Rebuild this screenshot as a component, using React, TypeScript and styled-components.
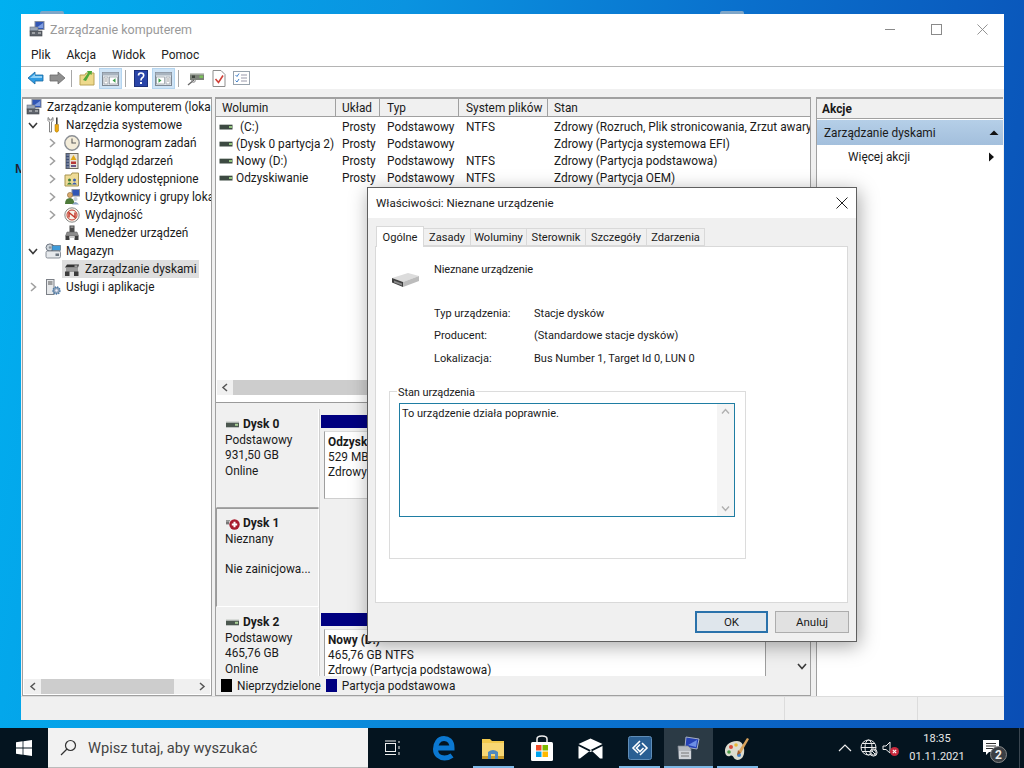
import React from "react";
import styled, { createGlobalStyle } from "styled-components";

const Global = createGlobalStyle`
  html, body { margin: 0; width: 1024px; height: 768px; overflow: hidden; }
  body { font-family: "Roboto", "Liberation Sans", sans-serif; font-size: 11.85px; color: #1a1a1a; }
  * { box-sizing: border-box; }
  svg { display: block; flex: none; }
`;

const Desktop = styled.div`
  position: relative; width: 1024px; height: 768px; display: flex; flex-direction: column; overflow: hidden;
  background: linear-gradient(100deg, #00b0f0 0%, #0a93e0 35%, #0a6fcc 65%, #0a4db4 100%);
`;
const Peek = styled.span`
  position: absolute; left: 15px; top: 161px; font-size: 13px; font-weight: 500; color: #223;
`;
const PeekTab = styled.span<{ $x: number }>`
  position: absolute; left: ${p => p.$x}px; top: 11px; width: 24px; height: 3px; background: #7fa6c8; border-radius: 2px 2px 0 0;
`;
const WorkArea = styled.div`
  position: relative; height: 728px; padding: 14px 20px 8px 21px;
`;
const Win = styled.div`
  height: 706px; background: #fff; display: flex; flex-direction: column;
`;
const TitleBar = styled.div`
  height: 30px; flex: none; display: flex; align-items: center; padding: 0 0 0 8px; gap: 5px;
`;
const TitleText = styled.span`
  font-size: 12.5px; color: #999;
`;
const Controls = styled.div`
  margin-left: auto; margin-right: -1px; display: flex; align-items: center;
`;
const Ctrl = styled.div`
  width: 46px; height: 30px; display: flex; align-items: center; justify-content: center; color: #8a8a8a;
`;
const MenuBar = styled.div`
  height: 23px; flex: none; display: flex; align-items: center; gap: 16px; padding: 0 0 0 10px; border-bottom: 1px solid #b4b4b4; font-size: 12px; color: #222;
`;
const ToolBar = styled.div`
  height: 22px; flex: none; display: flex; align-items: center; padding-left: 3px; background: #fff;
`;
const ToolBtn = styled.div<{ $w?: number; $on?: boolean }>`
  width: ${p => p.$w ?? 22}px; height: 21px; display: flex; align-items: center; justify-content: center; flex: none;
  background: ${p => (p.$on ? "#cfe4f6" : "transparent")};
  box-shadow: ${p => (p.$on ? "inset 0 0 0 1px #b5d5ef" : "none")};
`;
const ToolSep = styled.div`
  width: 1px; height: 17px; background: #a8a8a8; margin: 0 3px; flex: none;
`;
const Band = styled.div`
  height: 8px; flex: none; background: #f0f0f0;
`;
const Panes = styled.div`
  height: 599px; flex: none; display: flex; padding-left: 1px; background: #f0f0f0;
`;
const LeftPane = styled.div`
  width: 190px; margin-right: 3px; background: #fff; border: 1px solid #a0a0a0; border-top-width: 2px; display: flex; flex-direction: column; overflow: hidden;
`;
const Tree = styled.div`
  flex: 1; overflow: hidden; margin-top: -1px;
`;
const TreeRow = styled.div<{ $level: number }>`
  height: 18px; display: flex; align-items: center; white-space: nowrap; color: #1a1a1a;
  padding-left: ${p => (p.$level === 2 ? 22 : 3)}px;
`;
const Chevron = styled.div`
  width: 14px; display: flex; justify-content: center; flex: none;
`;
const Node = styled.div<{ $sel?: boolean; $root?: boolean }>`
  height: 18px; display: flex; align-items: center; gap: 5px; padding: 0 2px 0 2px;
  margin-left: ${p => (p.$root ? -2 : 3)}px;
  background: ${p => (p.$sel ? "#dedede" : "transparent")};
`;
const HScroll = styled.div`
  height: 15px; flex: none; display: flex; align-items: center; background: #f0f0f0; margin: 0 1px 1px;
`;
const ScrollBtn = styled.div<{ $w: number }>`
  width: ${p => p.$w}px; flex: none; display: flex; align-items: center; justify-content: center; color: #555;
`;
const Thumb = styled.div<{ $w: number }>`
  width: ${p => p.$w}px; height: 15px; background: #cdcdcd; flex: none;
`;
const ScrollFill = styled.div`
  flex: 1;
`;
const CenterPane = styled.div`
  width: 596px; margin-right: 5px; background: #fff; border: 1px solid #a0a0a0; border-top-width: 2px; display: flex; flex-direction: column; overflow: hidden;
`;
const cols = "120px 44px 79px 89px 1fr";
const ListHead = styled.div`
  height: 18px; flex: none; display: grid; grid-template-columns: ${cols}; background: #f0f0f0; border-bottom: 1px solid #a0a0a0;
`;
const HeadCell = styled.div<{ $pad?: number }>`
  display: flex; align-items: center; padding-left: ${p => p.$pad ?? 6}px; border-right: 1px solid #a0a0a0; color: #1a1a1a;
  &:last-child { border-right: 0; }
`;
const ListBody = styled.div`
  height: 263px; flex: none; padding-top: 1px; overflow: hidden;
`;
const ListRow = styled.div`
  height: 17px; display: grid; grid-template-columns: ${cols}; align-items: center; white-space: nowrap; color: #1a1a1a;
`;
const Cell = styled.div<{ $pad?: number }>`
  padding-left: ${p => p.$pad ?? 6}px; overflow: hidden; display: flex; align-items: center;
`;
const NameCell = styled(Cell)`
  padding-left: 3px; gap: 3px;
`;
const VolName = styled.span<{ $x: number }>`
  padding-left: ${p => p.$x}px;
`;
const Splitter = styled.div`
  height: 10px; flex: none; background: #fff; border-bottom: 3px solid #f0f0f0; box-shadow: inset 0 -1px 0 #9a9a9a;
`;
const Lower = styled.div`
  flex: 1; min-height: 0; display: flex; overflow: hidden; background: #f0f0f0;
`;
const DiskList = styled.div`
  flex: 1; min-width: 0; overflow: hidden; padding-top: 3px;
`;
const DiskRow = styled.div`
  height: 99px; display: grid; grid-template-columns: 103px 1fr;
`;
const DiskLabel = styled.div<{ $dark?: boolean }>`
  padding: 7px 0 0 8px; background: #f0f0f0; line-height: 15.3px; color: #1a1a1a;
  border-top: 1px solid ${p => (p.$dark ? "#9a9a9a" : "#f0f0f0")};
  border-left: 1px solid ${p => (p.$dark ? "#9a9a9a" : "#f0f0f0")};
  border-right: 1px solid #fff;
  border-bottom: 1px solid ${p => (p.$dark ? "#fff" : "#a8a8a8")};
`;
const DiskName = styled.div`
  display: flex; align-items: center; gap: 2px; font-weight: 700; height: 16px; font-size: 12px;
`;
const BlankGap = styled.div`
  height: 15px;
`;
const DiskVol = styled.div`
  padding: 6px 27px 0 1px; display: flex; flex-direction: column; border-left: 1px solid #cfcfcf; background: #f0f0f0;
`;
const NavyBar = styled.div`
  height: 13px; background: #000080; flex: none;
`;
const Part = styled.div`
  margin: 3px 0 9px 3px; flex: 1; background: #fff; border-left: 1px solid #9e9e9e; border-right: 1px solid #9e9e9e; border-bottom: 1px solid #cfcfcf; border-top: 1px solid #dcdcdc; padding: 3px 0 0 3px; line-height: 15px; white-space: nowrap; overflow: hidden;
`;
const PartName = styled.div`
  font-weight: 700;
`;
const VScroll = styled.div`
  width: 17px; flex: none; display: flex; flex-direction: column; justify-content: flex-end; align-items: center; background: #f0f0f0; padding-bottom: 5px; color: #555;
`;
const Legend = styled.div`
  height: 19px; flex: none; display: flex; align-items: center; background: #f0f0f0; padding-left: 5px; white-space: nowrap;
`;
const Swatch = styled.span<{ $c: string }>`
  width: 11px; height: 13px; background: ${p => p.$c}; margin-right: 5px; flex: none;
`;
const LegendText = styled.span`
  margin-right: 5px;
`;
const RightPane = styled.div`
  width: 187px; background: #fff; border: 1px solid #a0a0a0; border-top-width: 2px; border-right: 0; border-bottom: 0; display: flex; flex-direction: column;
`;
const ActHead = styled.div`
  height: 20px; background: #f0f0f0; border-bottom: 1px solid #a0a0a0; display: flex; align-items: center; padding-left: 5px; font-weight: 700; flex: none;
`;
const ActBand = styled.div`
  height: 25px; margin-top: 1px; background: linear-gradient(#b5cfe8, #a3bfdc); display: flex; align-items: center; justify-content: space-between; padding: 0 4px 0 7px; flex: none; color: #1a1a1a;
`;
const ActItem = styled.div`
  height: 24px; display: flex; align-items: center; justify-content: space-between; padding: 0 7px 0 31px; flex: none;
`;
const StatusBar = styled.div`
  flex: 1; display: flex; justify-content: flex-end; background: #f0f0f0; border-top: 1px solid #dcdcdc;
`;
const StatusCell = styled.div<{ $w: number }>`
  width: ${p => p.$w}px; border-left: 1px solid #dcdcdc; flex: none;
`;

/* dialog */
const Dialog = styled.div`
  position: absolute; left: 367px; top: 187px; width: 490px; height: 455px; display: flex; flex-direction: column;
  background: #f0f0f0; border: 1px solid #5f5f5f; box-shadow: 2px 4px 18px rgba(0, 0, 0, 0.35);
`;
const DlgTitle = styled.div`
  height: 30px; flex: none; background: #fff; display: flex; align-items: center; justify-content: space-between; padding: 0 8px 0 8px; color: #1a1a1a; font-size: 11.6px;
`;
const DlgBody = styled.div`
  flex: 1; display: flex; flex-direction: column; padding: 7px 8px 0 7px; font-size: 11px;
`;
const Tabs = styled.div`
  height: 21px; flex: none; display: flex; align-items: flex-end; padding-left: 1px;
`;
const Tab = styled.div<{ $w: number; $on?: boolean }>`
  width: ${p => p.$w}px; height: ${p => (p.$on ? 21 : 18)}px; flex: none; display: flex; align-items: center; justify-content: center;
  background: ${p => (p.$on ? "#fff" : "#f0f0f0")}; color: #1a1a1a;
  border: 1px solid #d9d9d9; border-bottom: ${p => (p.$on ? "0" : "1px solid #d9d9d9")};
  border-left-width: ${p => (p.$on ? 1 : 0)}px;
  margin-bottom: ${p => (p.$on ? -1 : 0)}px; position: relative; font-size: 11.1px;
`;
const Panel = styled.div`
  height: 357px; flex: none; background: #fff; border: 1px solid #d9d9d9; padding: 0 0 0 13px;
`;
const DevHead = styled.div`
  display: grid; grid-template-columns: 45px 1fr; height: 53px; padding-top: 16px; letter-spacing: -0.15px;
`;
const DevIconBox = styled.div`
  padding: 9px 0 0 2px;
`;
const PropGrid = styled.div`
  display: grid; grid-template-columns: 100px 1fr; grid-auto-rows: 22.5px; align-items: center; padding: 2px 0 0 45px; margin-bottom: 21px;
`;
const Group = styled.div`
  position: relative; width: 357px; height: 168px; border: 1px solid #dcdcdc; padding: 11px 0 0 9px;
`;
const GroupLabel = styled.span`
  position: absolute; left: 7px; top: -6px; background: #fff; padding: 0 1px; line-height: 14px; letter-spacing: -0.1px;
`;
const TextBox = styled.div`
  width: 336px; height: 114px; border: 1px solid #1f7da3; display: flex; justify-content: space-between; background: #fff;
`;
const BoxText = styled.div`
  padding: 3px 0 0 2px;
`;
const BoxScroll = styled.div`
  width: 17px; background: #f4f4f4; display: flex; flex-direction: column; justify-content: space-between; align-items: center; padding: 4px 0; color: #b0b0b0;
`;
const DlgFoot = styled.div`
  display: flex; justify-content: flex-end; gap: 7px; padding: 8px 0 0 0; margin-right: -1px;
`;
const Btn = styled.div<{ $def?: boolean; $w: number }>`
  width: ${p => p.$w}px; height: 22px; display: flex; align-items: center; justify-content: center; font-size: 11.5px; color: #1a1a1a;
  background: ${p => (p.$def ? "#dfe6ec" : "#e1e1e1")};
  border: ${p => (p.$def ? "2px solid #2a72ab" : "1px solid #adadad")};
`;

/* taskbar */
const Taskbar = styled.div`
  height: 40px; flex: none; background: #04141f; display: flex; align-items: stretch; color: #eee;
`;
const Start = styled.div`
  width: 48px; display: flex; align-items: center; justify-content: center; flex: none;
`;
const Search = styled.div`
  width: 320px; flex: none; background: #f2f2f2; display: flex; align-items: center; padding-left: 12px; gap: 11px; color: #444; font-size: 14.65px; border-bottom: 1px solid #bbb;
`;
const TaskView = styled.div`
  width: 52px; flex: none; display: flex; align-items: center; justify-content: center; padding-right: 4px;
`;
const TaskBtn = styled.div<{ $open?: boolean; $active?: boolean }>`
  position: relative; width: 48.8px; flex: none; display: flex; align-items: center; justify-content: center;
  background: ${p => (p.$active ? "#2b3a45" : "transparent")};
  &::after {
    content: ""; position: absolute; bottom: 0; height: 2px; background: #7db8e6;
    left: ${p => (p.$active ? 0 : 4)}px; right: ${p => (p.$active ? 0 : 4)}px;
    display: ${p => (p.$open ? "block" : "none")};
  }
`;
const Tray = styled.div`
  margin-left: auto; display: flex; align-items: center;
`;
const TrayIcon = styled.div<{ $w: number }>`
  width: ${p => p.$w}px; display: flex; align-items: center; justify-content: center; color: #e8e8e8;
`;
const Clock = styled.div`
  width: 72px; text-align: center; line-height: 18px; font-size: 11px; color: #e8e8e8;
`;
const Notif = styled.div`
  position: relative; width: 47px; height: 40px; display: flex; align-items: center; justify-content: center; padding-right: 11px;
  border-right: 1px solid #3a4650; margin-right: 4px;
`;
const Badge = styled.span`
  position: absolute; left: 17px; top: 18px; width: 17px; height: 17px; border-radius: 50%; background: #3b3f44; border: 1px solid #888;
  font-size: 12px; font-weight: 700; color: #eee; display: flex; align-items: center; justify-content: center;
`;

/* icons */
const Comp = () => (
  <svg width="16" height="16" viewBox="0 0 16 16">
    <rect x="6" y="0.5" width="9" height="8" fill="#3156b5" stroke="#8a8f9c" />
    <path d="M7 7 L14 2 V7Z" fill="#7e9ce0" />
    <rect x="1" y="6" width="8" height="4" fill="#9aa6b5" stroke="#6b7280" strokeWidth="0.6" />
    <rect x="1" y="10" width="12" height="5" fill="#5f646c" stroke="#3e4248" strokeWidth="0.6" />
    <rect x="3" y="11.5" width="3" height="1" fill="#ddd" />
    <rect x="9" y="11.5" width="3" height="1" fill="#ddd" />
  </svg>
);
const Tools = () => (
  <svg width="16" height="16" viewBox="0 0 16 16">
    <path d="M3 0.5 V3.5 L4.5 5 V15 H6.5 V5 L8 3.5 V0.5 L6.8 1.5 V3 H4.2 V1.5Z" fill="#fff" stroke="#666" strokeWidth="0.8" strokeLinejoin="round" />
    <rect x="11" y="0.5" width="1.6" height="7" fill="#444" />
    <path d="M10 7.5 H13.5 V14 Q11.8 16.5 10 14Z" fill="#eeaa10" stroke="#9c6e08" strokeWidth="0.5" />
  </svg>
);
const ClockI = () => (
  <svg width="16" height="16" viewBox="0 0 16 16">
    <circle cx="8" cy="8" r="7.2" fill="#f3ecd9" stroke="#8b8f94" strokeWidth="1.4" />
    <path d="M8 3.5 V8 H12" fill="none" stroke="#5c5c5c" strokeWidth="1.1" />
  </svg>
);
const EventV = () => (
  <svg width="16" height="16" viewBox="0 0 16 16">
    <rect x="2" y="0.5" width="12" height="15" fill="#e9e4d8" stroke="#6f6a5e" />
    <rect x="2" y="0.5" width="3.5" height="15" fill="#3f4f73" />
    <path d="M2.5 2 H5 M2.5 5 H5 M2.5 8 H5 M2.5 11 H5 M2.5 14 H5" stroke="#cdd3df" strokeWidth="0.7" />
    <path d="M9.5 2 L12.5 7 H6.5Z" fill="#e0a818" />
    <rect x="7" y="8.5" width="5" height="2.5" fill="#b83838" />
    <rect x="7" y="12" width="5" height="2" fill="#6a5a8a" />
  </svg>
);
const Shared = () => (
  <svg width="16" height="16" viewBox="0 0 16 16">
    <path d="M1 4 H7 L8 2 H14.5 V15 H1Z" fill="#eedb96" stroke="#a89550" />
    <circle cx="5.5" cy="9" r="1.5" fill="#3a7c3a" />
    <path d="M3 13.5 Q5.5 9.5 8 13.5Z" fill="#3a7c3a" />
    <circle cx="10.5" cy="9" r="1.5" fill="#3b5fb0" />
    <path d="M8 13.5 Q10.5 9.5 13 13.5Z" fill="#3b5fb0" />
  </svg>
);
const Users = () => (
  <svg width="16" height="16" viewBox="0 0 16 16">
    <rect x="8" y="0.5" width="7.5" height="6.5" fill="#3156b5" stroke="#8a8f9c" />
    <circle cx="6" cy="6" r="2.6" fill="#d9a96e" stroke="#7c5a2a" strokeWidth="0.5" />
    <path d="M1 15 Q1 9 6 9 Q10 9 10.5 15Z" fill="#4d7a3a" />
    <circle cx="11.5" cy="10" r="2" fill="#c9d2dc" />
    <path d="M8 15.5 Q11.5 10.5 15 15.5Z" fill="#8aa3c4" />
  </svg>
);
const Perf = () => (
  <svg width="16" height="16" viewBox="0 0 16 16">
    <circle cx="8" cy="8" r="7.2" fill="#f6f3ea" stroke="#8a8a8a" strokeWidth="1" />
    <circle cx="8" cy="8" r="5" fill="none" stroke="#c43a2c" strokeWidth="1" />
    <path d="M5 10.5 V5.5 L11 10.5 V5.5" fill="none" stroke="#c43a2c" strokeWidth="1.5" />
  </svg>
);
const DevMgr = () => (
  <svg width="16" height="16" viewBox="0 0 16 16">
    <rect x="5.5" y="0.5" width="5" height="6.5" fill="#4a4a4a" />
    <rect x="6.5" y="1.5" width="3" height="1.2" fill="#aaa" />
    <path d="M3 7 H13 L14.5 11 H1.5Z" fill="#8d8d8d" stroke="#555" strokeWidth="0.5" />
    <rect x="1.5" y="11" width="4" height="4" fill="#3e3e3e" />
    <rect x="10.5" y="11" width="4" height="4" fill="#3e3e3e" />
    <rect x="5.5" y="11" width="5" height="2" fill="#ccc" />
  </svg>
);
const Storage = () => (
  <svg width="16" height="16" viewBox="0 0 16 16">
    <ellipse cx="5" cy="4.5" rx="4" ry="3.6" fill="#cfd6dc" stroke="#6e7681" />
    <circle cx="5" cy="4.5" r="1.2" fill="#8c949c" />
    <rect x="7" y="2.5" width="8.5" height="5" fill="#3f9bd9" stroke="#55616e" strokeWidth="0.6" />
    <rect x="1" y="8" width="14.5" height="7" rx="1.5" fill="#e6e9ec" stroke="#6e7681" strokeWidth="0.8" />
    <rect x="10.5" y="10.5" width="3.5" height="2.5" fill="#6c7680" />
  </svg>
);
const DiskMgmt = () => (
  <svg width="16" height="16" viewBox="0 0 16 16">
    <path d="M3 3.5 H15 L14 6.5 H1Z" fill="#333" />
    <rect x="10.5" y="4.5" width="3" height="1.2" fill="#ccc" />
    <path d="M2 7 H14 V11 H2Z" fill="#9a9a9a" />
    <rect x="1" y="10.5" width="4.5" height="4.5" fill="#3c3c3c" />
    <rect x="10" y="10.5" width="4.5" height="4.5" fill="#3c3c3c" />
  </svg>
);
const Services = () => (
  <svg width="16" height="16" viewBox="0 0 16 16">
    <rect x="1.5" y="0.5" width="7.5" height="15" fill="#e6e8ea" stroke="#7c8087" />
    <path d="M3 3 H7.5 M3 5 H7.5" stroke="#555" />
    <circle cx="11.5" cy="11.5" r="3.4" fill="#8ea3b8" stroke="#4f7ba8" strokeWidth="1.6" strokeDasharray="1.4 0.9" />
    <circle cx="11.5" cy="11.5" r="1.2" fill="#eef" />
  </svg>
);
const Chev = ({ open }: { open?: boolean }) => (
  <svg width="10" height="10" viewBox="0 0 10 10" fill="none" stroke={open ? "#3a3a3a" : "#a0a0a0"} strokeWidth="1.6">
    {open ? <path d="M1 3 L5 7.5 L9 3" /> : <path d="M3 1 L7.5 5 L3 9" />}
  </svg>
);
const Drive = () => (
  <svg width="14" height="8" viewBox="0 0 14 8">
    <rect x="0.5" y="1" width="13" height="1.2" fill="#bfc5c0" />
    <rect x="0.5" y="2" width="13" height="4.5" fill="#3d4a42" />
    <rect x="10" y="3" width="3" height="2" fill="#93c47d" />
  </svg>
);
const DriveLabel = () => (
  <svg width="16" height="8" viewBox="0 0 16 8">
    <rect x="1" y="0.5" width="13" height="1.4" fill="#bfc5c0" />
    <rect x="1" y="1.8" width="13" height="4.5" fill="#4b574f" />
    <rect x="10" y="2.8" width="3" height="2" fill="#a9cf95" />
  </svg>
);
const DriveBad = () => (
  <svg width="16" height="14" viewBox="0 0 16 14">
    <rect x="1" y="3" width="4" height="1.4" fill="#999" />
    <rect x="1" y="4.4" width="3" height="3" fill="#777" />
    <circle cx="9.5" cy="7.5" r="5.2" fill="#a81c2e" />
    <path d="M9.5 4.8 V10.2 M6.8 7.5 H12.2" stroke="#fff" strokeWidth="2" />
  </svg>
);
const Back = () => (
  <svg width="17" height="14" viewBox="0 0 17 14">
    <path d="M1 7 L8 1 V4 H16 V10 H8 V13Z" fill="#2f9be3" stroke="#17679f" strokeWidth="0.8" />
    <path d="M3 7 L8 3 V5 H15 V7Z" fill="#8fd0f6" />
  </svg>
);
const Fwd = () => (
  <svg width="17" height="14" viewBox="0 0 17 14">
    <path d="M16 7 L9 1 V4 H1 V10 H9 V13Z" fill="#8f8f8f" stroke="#6b6b6b" strokeWidth="0.8" />
  </svg>
);
const UpFolder = () => (
  <svg width="16" height="16" viewBox="0 0 16 16">
    <path d="M1 5 H6 L7 3 H15 V15 H1Z" fill="#eed98c" stroke="#b9a255" />
    <path d="M4 10 L9 3 L8 1 L13 1 L12.5 5 L11 4 L7 11Z" fill="#4fa83a" />
  </svg>
);
const FlipBox = styled.div<{ $flip?: boolean }>`
  transform: ${p => (p.$flip ? "scaleX(-1)" : "none")};
`;
const PaneL = ({ flip }: { flip?: boolean }) => (
  <FlipBox $flip={flip}>
    <svg width="17" height="15" viewBox="0 0 17 15">
      <rect x="0.5" y="1.5" width="16" height="13" fill="#eef2f5" stroke="#7d8792" />
      <rect x="0.5" y="1.5" width="16" height="3" fill="#a9b4bf" />
      <rect x="2" y="6" width="4" height="7" fill="#fff" stroke="#8a939c" strokeWidth="0.7" />
      <path d="M3 8 H5 M3 10 H5" stroke="#777" strokeWidth="0.7" />
      <rect x="7.5" y="6" width="8" height="7" fill="#fff" stroke="#8a939c" strokeWidth="0.7" />
      <path d="M13.5 7.2 L10.5 9.5 L13.5 11.8Z" fill="#3aa04a" />
    </svg>
  </FlipBox>
);
const Help = () => (
  <svg width="14" height="17" viewBox="0 0 14 17">
    <rect x="0.5" y="0.5" width="13" height="16" fill="#2a45a8" stroke="#1c2f78" />
    <path d="M4.5 5.5 Q4.5 3 7 3 Q9.7 3 9.7 5.5 Q9.7 7 8 8 Q7 8.7 7 10.5" fill="none" stroke="#fff" strokeWidth="1.6" />
    <rect x="6" y="12" width="2" height="2" fill="#fff" />
  </svg>
);
const Connect = () => (
  <svg width="18" height="16" viewBox="0 0 18 16">
    <rect x="3" y="3" width="14" height="7" fill="#7c8278" />
    <rect x="3" y="3" width="14" height="1.5" fill="#c7cbc5" />
    <rect x="5" y="5.5" width="3" height="2.5" fill="#3e453e" />
    <rect x="12.5" y="5.5" width="3.5" height="2.5" fill="#7bc05a" />
    <path d="M1 15 L7 10" stroke="#666" strokeWidth="1.3" />
    <circle cx="6.5" cy="10.5" r="1.8" fill="none" stroke="#888" />
  </svg>
);
const CheckDoc = () => (
  <svg width="14" height="17" viewBox="0 0 14 17">
    <path d="M1 0.5 H9 L13 4.5 V16.5 H1Z" fill="#fff" stroke="#8d8d8d" />
    <path d="M3.5 9 L6.5 12.5 L11 5.5" fill="none" stroke="#d04038" strokeWidth="1.6" />
  </svg>
);
const ListI = () => (
  <svg width="17" height="14" viewBox="0 0 17 14">
    <rect x="0.5" y="0.5" width="16" height="13" fill="#fff" stroke="#97a2ac" />
    <path d="M2.5 4 L4 5.5 L6 2.5 M2.5 9.5 L4 11 L6 8" fill="none" stroke="#3f7fc9" strokeWidth="1" />
    <path d="M8 4 H14 M8 7 H14 M8 10 H14" stroke="#99a" strokeWidth="1" />
  </svg>
);
const X = ({ s, c }: { s: number; c: string }) => (
  <svg width={s} height={s} viewBox="0 0 12 12" fill="none" stroke={c} strokeWidth="1">
    <path d="M0.5 0.5 L11.5 11.5 M11.5 0.5 L0.5 11.5" />
  </svg>
);
const UsbDrive = () => (
  <svg width="29" height="16" viewBox="0 0 29 16">
    <path d="M1 6 L17 1 L28 4 L12 10Z" fill="#dcdcdc" />
    <path d="M1 6 L12 10 V15 L1 10.5Z" fill="#3f3f3f" />
    <path d="M12 10 L28 4 V9 L12 15Z" fill="#bcbcbc" />
    <path d="M3 8.5 L11 11.5 V13.5 L3 10.5Z" fill="#8a8a8a" />
  </svg>
);
const WinLogo = () => (
  <svg width="16" height="16" viewBox="0 0 16 16" fill="#fff">
    <path d="M0 2.2 L6.6 1.3 V7.5 H0Z M7.4 1.2 L16 0 V7.5 H7.4Z M0 8.5 H6.6 V14.7 L0 13.8Z M7.4 8.5 H16 V16 L7.4 14.8Z" />
  </svg>
);
const SearchI = () => (
  <svg width="17" height="17" viewBox="0 0 17 17" fill="none" stroke="#333" strokeWidth="1.2">
    <circle cx="10.5" cy="6.5" r="5" />
    <path d="M7 10 L1 16" />
  </svg>
);
const TaskViewI = () => (
  <svg width="17" height="16" viewBox="0 0 17 16" fill="none" stroke="#eee" strokeWidth="1">
    <rect x="1.5" y="3.5" width="10" height="8" />
    <path d="M1 1 H12 M1 14.5 H12 M15 1 V3 M15 6 V9 M15 12 V15" />
  </svg>
);
const Edge = () => (
  <svg width="24" height="26" viewBox="0 0 24 26">
    <path d="M5 13 H20 C20 6 16 3.5 12 3.5 C6.5 3.5 3.5 8.5 3.5 14 C3.5 20 8 23 12.5 23 C15.5 23 18 22 20 20.5" fill="none" stroke="#0b78d1" strokeWidth="5" />
  </svg>
);
const Folder = () => (
  <svg width="24" height="24" viewBox="0 0 24 24">
    <path d="M1 3 H9 L11 5 H23 V22 H1Z" fill="#f2c94c" />
    <rect x="1" y="7" width="22" height="15" fill="#f7d774" />
    <rect x="1" y="20" width="22" height="3" fill="#c79a2a" />
    <path d="M7 23 V16 Q12 12 17 16 V23 H14 V18 H10 V23Z" fill="#4f89c0" />
  </svg>
);
const Store = () => (
  <svg width="24" height="27" viewBox="0 0 24 27">
    <path d="M7 8 V4 Q7 1 12 1 Q17 1 17 4 V8" fill="none" stroke="#eee" strokeWidth="1.5" />
    <rect x="1" y="7" width="22" height="19" rx="1.5" fill="#fff" />
    <rect x="6" y="10" width="5.5" height="5.5" fill="#ef4b28" />
    <rect x="12.5" y="10" width="5.5" height="5.5" fill="#7fba00" />
    <rect x="6" y="16.5" width="5.5" height="5.5" fill="#00a4ef" />
    <rect x="12.5" y="16.5" width="5.5" height="5.5" fill="#ffb900" />
  </svg>
);
const Mail = () => (
  <svg width="25" height="21" viewBox="0 0 25 21">
    <path d="M0.5 6 L12.5 0.5 L24.5 6 L12.5 12Z" fill="#fff" />
    <path d="M0.5 8 L12.5 14 L24.5 8 V20.5 H22 L13 12 L2 20.5 H0.5Z" fill="#fff" />
  </svg>
);
const AppI = () => (
  <svg width="24" height="24" viewBox="0 0 24 24">
    <rect x="0.5" y="0.5" width="23" height="23" rx="2" fill="#2a5f93" stroke="#5f8db8" />
    <path d="M12 5 L5 12 L10 17 M12 8.5 L8.5 12 L12 15.5 L15.5 12 M14 7 L19 12 L12 19" fill="none" stroke="#fff" strokeWidth="1.6" />
  </svg>
);
const CompBig = () => (
  <svg width="24" height="24" viewBox="0 0 24 24">
    <path d="M10 1 L23 3 L21 13 L9 11Z" fill="#2541b5" stroke="#a6b0c6" />
    <path d="M12 9 L21 4 L20 11Z" fill="#6d8fe6" />
    <path d="M2 10 H12 L15 13 V23 H3Z" fill="#b3b7bd" stroke="#7f8690" strokeWidth="0.7" />
    <path d="M3 15 H15 V23 H3Z" fill="#cfd3d8" />
    <path d="M5 17 H13 M5 20 H13" stroke="#777" />
  </svg>
);
const Paint = () => (
  <svg width="26" height="25" viewBox="0 0 26 25">
    <path d="M13 5 C5 5 0.5 10 1 16 C1.5 20 4 21 6 20 C8 19 9 20 10 22 C11 24 15 25 18 22 C22 18 21 5 13 5Z" fill="#dcdcd0" />
    <circle cx="7" cy="11" r="2" fill="#d84a3c" />
    <circle cx="12" cy="9" r="1.8" fill="#e7b93a" />
    <circle cx="5" cy="16" r="1.8" fill="#4a9b48" />
    <circle cx="15" cy="19" r="2" fill="#3e7fc9" />
    <path d="M14 16 L23 2 L25 3 L17 17Z" fill="#d9a35c" />
    <path d="M14 14 L17 17 L13 19Z" fill="#a55a2a" />
  </svg>
);
const Caret = () => (
  <svg width="14" height="8" viewBox="0 0 14 8" fill="none" stroke="#eee" strokeWidth="1.2"><path d="M1 7 L7 1 L13 7" /></svg>
);
const Globe = () => (
  <svg width="18" height="18" viewBox="0 0 18 18" fill="none" stroke="#eee" strokeWidth="1">
    <circle cx="8.5" cy="8.5" r="7.5" />
    <ellipse cx="8.5" cy="8.5" rx="3.5" ry="7.5" />
    <path d="M1 8.5 H16 M2 4.5 H15 M2 12.5 H15" />
    <circle cx="13.5" cy="13.5" r="3.6" fill="#04141f" />
    <circle cx="13.5" cy="13.5" r="2.6" />
    <path d="M11.8 11.8 L15.2 15.2" />
  </svg>
);
const Speaker = () => (
  <svg width="18" height="17" viewBox="0 0 18 17">
    <path d="M1 6 H4 L8 2 V13 L4 9.5 H1Z" fill="none" stroke="#eee" strokeWidth="1" />
    <circle cx="12.5" cy="11.5" r="4.5" fill="#c8283c" />
    <path d="M10.8 9.8 L14.2 13.2 M14.2 9.8 L10.8 13.2" stroke="#fff" strokeWidth="1.1" />
  </svg>
);
const NotifI = () => (
  <svg width="16" height="16" viewBox="0 0 16 16">
    <path d="M0 0 H16 V12 H6 L3 15 V12 H0Z" fill="#fff" />
    <path d="M3 3.5 H13 M3 6 H13 M3 8.5 H10" stroke="#333" />
  </svg>
);
const Tri = ({ right }: { right?: boolean }) => (
  <svg width="10" height="10" viewBox="0 0 10 10">
    {right ? <path d="M3 0.5 L8 5 L3 9.5Z" fill="#111" /> : <path d="M0.5 7 L5 2.5 L9.5 7Z" fill="#111" />}
  </svg>
);
const ScrollL = () => (
  <svg width="8" height="9" viewBox="0 0 8 9" fill="none" stroke="#555" strokeWidth="1.5"><path d="M6 1 L2 4.5 L6 8" /></svg>
);
const ScrollR = () => (
  <svg width="8" height="9" viewBox="0 0 8 9" fill="none" stroke="#555" strokeWidth="1.5"><path d="M2 1 L6 4.5 L2 8" /></svg>
);

const tree: { l: 0 | 1 | 2; c?: "o" | "c"; t: string; i: React.ReactNode; s?: boolean }[] = [
  { l: 0, t: "Zarządzanie komputerem (lokalny)", i: <Comp /> },
  { l: 1, c: "o", t: "Narzędzia systemowe", i: <Tools /> },
  { l: 2, c: "c", t: "Harmonogram zadań", i: <ClockI /> },
  { l: 2, c: "c", t: "Podgląd zdarzeń", i: <EventV /> },
  { l: 2, c: "c", t: "Foldery udostępnione", i: <Shared /> },
  { l: 2, c: "c", t: "Użytkownicy i grupy lokalne", i: <Users /> },
  { l: 2, c: "c", t: "Wydajność", i: <Perf /> },
  { l: 2, t: "Menedżer urządzeń", i: <DevMgr /> },
  { l: 1, c: "o", t: "Magazyn", i: <Storage /> },
  { l: 2, t: "Zarządzanie dyskami", i: <DiskMgmt />, s: true },
  { l: 1, c: "c", t: "Usługi i aplikacje", i: <Services /> },
];
const vols = [
  { n: " (C:)", f: "NTFS", s: "Zdrowy (Rozruch, Plik stronicowania, Zrzut awaryjny, Partycja podstawowa)", x: 4 },
  { n: "(Dysk 0 partycja 2)", f: "", s: "Zdrowy (Partycja systemowa EFI)", x: 0 },
  { n: "Nowy (D:)", f: "NTFS", s: "Zdrowy (Partycja podstawowa)", x: 0 },
  { n: "Odzyskiwanie", f: "NTFS", s: "Zdrowy (Partycja OEM)", x: 0 },
];

export default function App() {
  return (
    <Desktop>
      <Global />
      <Peek>M</Peek>
      <PeekTab $x={40} />
      <PeekTab $x={720} />
      <WorkArea>
        <Win>
          <TitleBar>
            <Comp />
            <TitleText>Zarządzanie komputerem</TitleText>
            <Controls>
              <Ctrl><svg width="10" height="1" viewBox="0 0 10 1"><rect width="10" height="1" fill="#8a8a8a" /></svg></Ctrl>
              <Ctrl><svg width="11" height="11" viewBox="0 0 11 11" fill="none" stroke="#8a8a8a"><rect x="0.5" y="0.5" width="10" height="10" /></svg></Ctrl>
              <Ctrl><X s={11} c="#8a8a8a" /></Ctrl>
            </Controls>
          </TitleBar>
          <MenuBar><span>Plik</span><span>Akcja</span><span>Widok</span><span>Pomoc</span></MenuBar>
          <ToolBar>
            <ToolBtn><Back /></ToolBtn>
            <ToolBtn><Fwd /></ToolBtn>
            <ToolSep />
            <ToolBtn $w={24}><UpFolder /></ToolBtn>
            <ToolBtn $w={23} $on><PaneL /></ToolBtn>
            <ToolSep />
            <ToolBtn $w={23}><Help /></ToolBtn>
            <ToolBtn $w={23} $on><PaneL flip /></ToolBtn>
            <ToolSep />
            <ToolBtn $w={27}><Connect /></ToolBtn>
            <ToolBtn $w={19}><CheckDoc /></ToolBtn>
            <ToolBtn $w={26}><ListI /></ToolBtn>
          </ToolBar>
          <Band />
          <Panes>
            <LeftPane>
              <Tree>
                {tree.map(r => (
                  <TreeRow key={r.t} $level={r.l}>
                    {r.l > 0 && <Chevron>{r.c && <Chev open={r.c === "o"} />}</Chevron>}
                    <Node $sel={r.s} $root={r.l === 0}>{r.i}<span>{r.t}</span></Node>
                  </TreeRow>
                ))}
              </Tree>
              <HScroll>
                <ScrollBtn $w={17}><ScrollL /></ScrollBtn>
                <Thumb $w={133} />
                <ScrollFill />
                <ScrollBtn $w={17}><ScrollR /></ScrollBtn>
              </HScroll>
            </LeftPane>
            <CenterPane>
              <ListHead>
                <HeadCell>Wolumin</HeadCell>
                <HeadCell>Układ</HeadCell>
                <HeadCell $pad={7}>Typ</HeadCell>
                <HeadCell $pad={7}>System plików</HeadCell>
                <HeadCell>Stan</HeadCell>
              </ListHead>
              <ListBody>
                {vols.map(v => (
                  <ListRow key={v.n}>
                    <NameCell><Drive /><VolName $x={v.x}>{v.n}</VolName></NameCell>
                    <Cell>Prosty</Cell>
                    <Cell $pad={7}>Podstawowy</Cell>
                    <Cell $pad={7}>{v.f}</Cell>
                    <Cell>{v.s}</Cell>
                  </ListRow>
                ))}
              </ListBody>
              <HScroll>
                <ScrollBtn $w={16}><ScrollL /></ScrollBtn>
                <Thumb $w={300} />
              </HScroll>
              <Splitter />
              <Lower>
                <DiskList>
                  <DiskRow>
                    <DiskLabel>
                      <DiskName><DriveLabel />Dysk 0</DiskName>
                      <div>Podstawowy</div><div>931,50 GB</div><div>Online</div>
                    </DiskLabel>
                    <DiskVol>
                      <NavyBar />
                      <Part><PartName>Odzyskiwanie</PartName><div>529 MB NTFS</div><div>Zdrowy (Partycja OEM)</div></Part>
                    </DiskVol>
                  </DiskRow>
                  <DiskRow>
                    <DiskLabel $dark>
                      <DiskName><DriveBad />Dysk 1</DiskName>
                      <div>Nieznany</div><BlankGap /><div>Nie zainicjowa...</div>
                    </DiskLabel>
                    <DiskVol />
                  </DiskRow>
                  <DiskRow>
                    <DiskLabel>
                      <DiskName><DriveLabel />Dysk 2</DiskName>
                      <div>Podstawowy</div><div>465,76 GB</div><div>Online</div>
                    </DiskLabel>
                    <DiskVol>
                      <NavyBar />
                      <Part><PartName>Nowy (D:)</PartName><div>465,76 GB NTFS</div><div>Zdrowy (Partycja podstawowa)</div></Part>
                    </DiskVol>
                  </DiskRow>
                </DiskList>
                <VScroll><Chev open /></VScroll>
              </Lower>
              <Legend>
                <Swatch $c="#000" /><LegendText>Nieprzydzielone</LegendText>
                <Swatch $c="#000080" /><LegendText>Partycja podstawowa</LegendText>
              </Legend>
            </CenterPane>
            <RightPane>
              <ActHead>Akcje</ActHead>
              <ActBand><span>Zarządzanie dyskami</span><Tri /></ActBand>
              <ActItem><span>Więcej akcji</span><Tri right /></ActItem>
            </RightPane>
          </Panes>
          <StatusBar>
            <StatusCell $w={133} />
            <StatusCell $w={87} />
          </StatusBar>
        </Win>
        <Dialog>
          <DlgTitle><span>Właściwości: Nieznane urządzenie</span><X s={12} c="#222" /></DlgTitle>
          <DlgBody>
            <Tabs>
              <Tab $w={48} $on>Ogólne</Tab>
              <Tab $w={47}>Zasady</Tab>
              <Tab $w={56}>Woluminy</Tab>
              <Tab $w={59}>Sterownik</Tab>
              <Tab $w={61}>Szczegóły</Tab>
              <Tab $w={58}>Zdarzenia</Tab>
            </Tabs>
            <Panel>
              <DevHead>
                <DevIconBox><UsbDrive /></DevIconBox>
                <span>Nieznane urządzenie</span>
              </DevHead>
              <PropGrid>
                <span>Typ urządzenia:</span><span>Stacje dysków</span>
                <span>Producent:</span><span>(Standardowe stacje dysków)</span>
                <span>Lokalizacja:</span><span>Bus Number 1, Target Id 0, LUN 0</span>
              </PropGrid>
              <Group>
                <GroupLabel>Stan urządzenia</GroupLabel>
                <TextBox>
                  <BoxText>To urządzenie działa poprawnie.</BoxText>
                  <BoxScroll>
                    <svg width="9" height="7" viewBox="0 0 9 7" fill="none" stroke="#b0b0b0" strokeWidth="1.4"><path d="M1 5.5 L4.5 1.5 L8 5.5" /></svg>
                    <svg width="9" height="7" viewBox="0 0 9 7" fill="none" stroke="#b0b0b0" strokeWidth="1.4"><path d="M1 1.5 L4.5 5.5 L8 1.5" /></svg>
                  </BoxScroll>
                </TextBox>
              </Group>
            </Panel>
            <DlgFoot>
              <Btn $def $w={73}>OK</Btn>
              <Btn $w={74}>Anuluj</Btn>
            </DlgFoot>
          </DlgBody>
        </Dialog>
      </WorkArea>
      <Taskbar>
        <Start><WinLogo /></Start>
        <Search><SearchI /><span>Wpisz tutaj, aby wyszukać</span></Search>
        <TaskView><TaskViewI /></TaskView>
        <TaskBtn><Edge /></TaskBtn>
        <TaskBtn $open><Folder /></TaskBtn>
        <TaskBtn><Store /></TaskBtn>
        <TaskBtn><Mail /></TaskBtn>
        <TaskBtn $open><AppI /></TaskBtn>
        <TaskBtn $open $active><CompBig /></TaskBtn>
        <TaskBtn $open><Paint /></TaskBtn>
        <Tray>
          <TrayIcon $w={24}><Caret /></TrayIcon>
          <TrayIcon $w={24}><Globe /></TrayIcon>
          <TrayIcon $w={20}><Speaker /></TrayIcon>
          <Clock><div>18:35</div><div>01.11.2021</div></Clock>
          <Notif><NotifI /><Badge>2</Badge></Notif>
        </Tray>
      </Taskbar>
    </Desktop>
  );
}
